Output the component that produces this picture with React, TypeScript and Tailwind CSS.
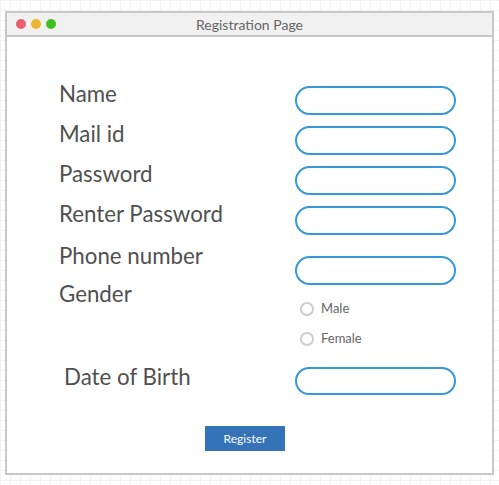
import React from "react";

type FieldRowProps = {
  label: string;
  rowClass: string;
  labelClass?: string;
  inputClass: string;
};

const font = "font-['Lato','Liberation_Sans',sans-serif]";

const FieldRow: React.FC<FieldRowProps> = ({ label, rowClass, labelClass = "", inputClass }) => (
  <div className={`flex items-start ${rowClass}`}>
    <div className={`w-[236px] pt-[1px] text-[22.3px] leading-[26px] text-[#505050] ${labelClass}`}>{label}</div>
    <div className={`w-[161px] h-[29px] rounded-full border-2 border-[#3498db] bg-white ${inputClass}`} />
  </div>
);

const Radio: React.FC<{ label: string }> = ({ label }) => (
  <div className="flex items-center h-[30px]">
    <span className="w-[14px] h-[14px] rounded-full border-2 border-[#cdcdcd] bg-white" />
    <span className="ml-[7px] text-[13px] text-[#666666]">{label}</span>
  </div>
);

export default function App() {
  return (
    <div
      className={`w-[499px] h-[485px] pt-[11px] pl-[5px] bg-white bg-[linear-gradient(to_right,#f2f2f2_1px,transparent_1px),linear-gradient(to_bottom,#f2f2f2_1px,transparent_1px)] bg-[size:10px_10px] ${font}`}
    >
      <div className="w-[489px] h-[464px] border-2 border-[#c8c8c8] bg-white flex flex-col">
        {/* title bar */}
        <div className="relative h-[24px] bg-[#f1f1f1] border-b-2 border-[#c8c8c8] flex items-center">
          <div className="flex gap-[5px] ml-[9px]">
            <span className="w-[10px] h-[10px] rounded-full bg-[#ed5e6c]" />
            <span className="w-[10px] h-[10px] rounded-full bg-[#efb42f]" />
            <span className="w-[10px] h-[10px] rounded-full bg-[#3cc31f]" />
          </div>
          <div className="absolute inset-0 flex items-center justify-center text-[14px] text-[#666666]">
            Registration Page
          </div>
        </div>

        {/* form body */}
        <div className="flex flex-col pt-[43px] pl-[52px]">
          <FieldRow label="Name" rowClass="h-[40px]" inputClass="mt-[6px]" />
          <FieldRow label="Mail id" rowClass="h-[40px]" inputClass="mt-[6px]" />
          <FieldRow label="Password" rowClass="h-[40px]" inputClass="mt-[6px]" />
          <FieldRow label="Renter Password" rowClass="h-[40px]" inputClass="mt-[6px]" />
          <FieldRow label="Phone number" rowClass="h-[45px]" labelClass="mt-[2px]" inputClass="mt-[16px]" />

          <div className="flex items-start">
            <div className="w-[236px] pt-[1px] text-[22.3px] leading-[26px] text-[#505050] -mt-[5px]">Gender</div>
            <div className="flex flex-col mt-[9px] ml-[5px]">
              <Radio label="Male" />
              <Radio label="Female" />
            </div>
          </div>

          <FieldRow
            label="Date of Birth"
            rowClass="mt-[9px]"
            labelClass="pl-[5px]"
            inputClass="mt-[4px] !h-[28px]"
          />

          <button className="self-start ml-[146px] mt-[31px] w-[80px] h-[25px] bg-[#3573b8] text-white text-[12px]">
            Register
          </button>
        </div>
      </div>
    </div>
  );
}
